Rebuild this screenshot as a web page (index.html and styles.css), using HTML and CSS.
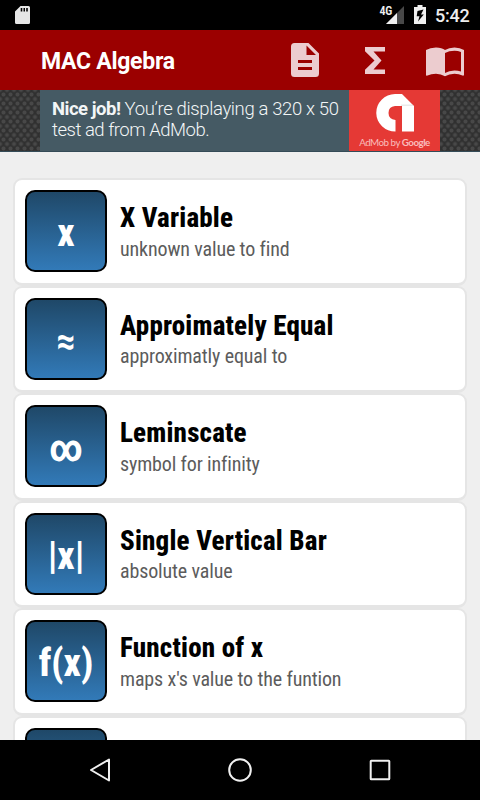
FILE: index.html
```
<!DOCTYPE html>
<html lang="en">
<head>
<meta charset="utf-8">
<title>MAC Algebra</title>
<link rel="stylesheet" href="styles.css">
</head>
<body>
<div class="status">
  <svg class="sd" width="15" height="18" viewBox="0 0 15 18"><path fill="#e6e6e6" fill-rule="evenodd" d="M5.500 0H13.500Q15 0 15 1.500V16.500Q15 18 13.500 18H1.500Q0 18 0 16.500V5.500ZM5.700 2V5.500H7.300V2ZM8.500 2V5.500H10V2ZM11.200 2V5.500H12.800V2Z"/></svg>
  <span class="net">4G</span>
  <svg class="signal" width="18" height="18" viewBox="0 0 18 18"><path fill="#484848" d="M18 0V18H0Z"/><path fill="#f0f0f0" d="M11 7V18H0Z"/></svg>
  <svg class="battery" width="12" height="19" viewBox="0 0 12 19"><path fill="#f0f0f0" d="M3.500 0H8.500V2H12V19H0V2H3.500Z"/><path d="M9.500 4.500 3.500 6 2.700 11.300H5.500L4 16.500 9.800 9.500H7Z"/></svg>
  <span class="clock">5:42</span>
</div>
<header class="bar">
  <h1 class="title">MAC Algebra</h1>
  <svg class="doc" width="28" height="34" viewBox="0 0 28 34"><path fill="#eccccf" fill-rule="evenodd" d="M3.500 0H17.500L28 10.500V30.500Q28 34 24.500 34H3.500Q0 34 0 30.500V3.500Q0 0 3.500 0ZM15.500 2.500V12H25ZM7 17V20H21V17ZM7 24V27H21V24Z"/></svg>
  <svg class="sigma" width="20" height="27" viewBox="0 0 20 27"><path fill="#eccccf" d="M0 0H20V4.500H8.500L16.500 13.500 8.500 22.500H20V27H0V22.700L9.500 13.500 0 4.300Z"/></svg>
  <svg class="book" width="38" height="30" viewBox="0 0 38 30"><path fill="#eccccf" fill-rule="evenodd" d="M0 3Q4 .5 10 .5T19 3Q23 .5 28.500 .5T38 3V28Q37.500 29 36.500 28.500Q33 26.800 28.500 26.800 23 26.800 19 29.300 15 26.800 10 26.800 5 26.800 1.500 28.500 0 29 0 28ZM19 6V26Q23 23.500 28.500 23.500 32 23.500 35 24.500V5Q32 3.800 28.500 3.800 23 3.800 19 6Z"/></svg>
</header>
<section class="ad">
  <div class="pitch">
    <p class="greeting"><b>Nice job!</b> You’re displaying a 320 x 50</p>
    <p>test ad from AdMob.</p>
  </div>
  <div class="brand">
    <svg class="mark" width="38" height="38" viewBox="0 0 38 38"><path fill="#fff" d="M19 0H26L38 12V37.500H26V12H19Q12.500 12.500 12.500 19 12.500 25 19.500 26V37.500A19 18.750 0 0 1 19 0Z"/><path fill="#ddd" opacity=".6" d="M25 12H38L36 10.500H25Z"/></svg>
    <div class="brand-name">AdMob by <span>Google</span></div>
  </div>
</section>
<main class="list">
  <article class="card"><div class="tile"><span>x</span></div><div class="text"><h2>X Variable</h2><p>unknown value to find</p></div></article>
  <article class="card"><div class="tile"><span>≈</span></div><div class="text"><h2>Approimately Equal</h2><p>approximatly equal to</p></div></article>
  <article class="card"><div class="tile"><span class="infinity">∞</span></div><div class="text"><h2>Leminscate</h2><p>symbol for infinity</p></div></article>
  <article class="card"><div class="tile"><span>|x|</span></div><div class="text"><h2>Single Vertical Bar</h2><p>absolute value</p></div></article>
  <article class="card"><div class="tile"><span>f(x)</span></div><div class="text"><h2>Function of x</h2><p>maps x's value to the funtion</p></div></article>
  <article class="card"><div class="tile"></div></article>
</main>
<nav class="nav">
  <svg width="24" height="24" viewBox="0 0 24 24"><path d="M21 1.500V22.500L3 12Z"/></svg>
  <svg width="24" height="24" viewBox="0 0 24 24"><circle cx="12" cy="12" r="10.800"/></svg>
  <svg width="24" height="24" viewBox="0 0 24 24"><rect x="2.700" y="2.700" width="18.600" height="18.600" rx=".6"/></svg>
</nav>
</body>
</html>
```
FILE: styles.css
```
* { box-sizing: border-box; }
body { margin: 0; width: 480px; height: 800px; overflow: hidden; display: flex; flex-direction: column; background: #efefef; font-family: Roboto, sans-serif; }
h1, h2, p { margin: 0; white-space: nowrap; }
svg { display: block; flex: none; }
.status { height: 30px; flex: none; background: #000; display: flex; align-items: flex-start; padding: 6px 10px 0 15px; color: #eee; }
.net { margin-left: auto; font-size: 12px; line-height: 10px; font-weight: 600; font-stretch: 75%; letter-spacing: -.3px; margin-right: -6px; z-index: 1; }
.battery { margin: -1px 9px 0 10px; }
.clock { font-size: 18px; line-height: 20px; font-weight: 500; width: 35px; white-space: nowrap; letter-spacing: -.2px; }
.bar { height: 60px; flex: none; background: #9b0000; display: flex; align-items: center; padding: 0 16px 0 41px; }
.title { color: #fff; font-size: 23px; font-weight: 700; letter-spacing: -.28px; margin: 2px auto 0 0; }
.sigma { margin: 0 41px 0 46px; }
.book { margin-top: 3px; }
.ad { height: 62px; flex: none; display: flex; padding: 0 40px; border-bottom: 1px solid #344b57; background-color: #303030; background-image: radial-gradient(circle, #484848 1.500px, transparent 2.500px), radial-gradient(circle, #484848 1.500px, transparent 2.500px); background-size: 7px 9px; background-position: 0 0, 3.500px 4.500px; }
.pitch { width: 309px; background: #455a64; padding: 9px 0 0 12px; color: #f3f6f7; font-size: 18.500px; font-weight: 300; line-height: 20.500px; letter-spacing: -.49px; }
.greeting { letter-spacing: -.36px; }
.pitch b { font-weight: 700; letter-spacing: -.49px; }
.brand { width: 91px; background: #e53935; display: flex; flex-direction: column; align-items: center; padding-top: 4px; }
.brand-name { color: #f9bcbb; font-size: 9.800px; line-height: 12px; margin-top: 4px; white-space: nowrap; font-family: Lato, sans-serif; letter-spacing: -.5px; }
.brand-name span { font-weight: 700; }
.list { flex: 1; min-height: 0; overflow: hidden; padding: 26px 13px 0; }
.card { height: 107.500px; border: 2px solid #e5e5e5; border-bottom-width: 3.500px; border-radius: 9px; background: #fff; display: flex; padding: 10px; }
.tile { width: 82px; height: 82px; flex: none; border: 2px solid #000; border-radius: 10px; background: linear-gradient(#1f4868, #327ab8); display: flex; justify-content: center; color: #fff; font-size: 38px; line-height: 82px; font-weight: 800; font-stretch: 75%; }
.infinity { font-weight: 700; }
.text { padding: 12px 0 0 13px; font-stretch: 75%; }
.text h2 { font-size: 27px; line-height: 32px; font-weight: 800; letter-spacing: .2px; color: #000; }
.text p { font-size: 20px; line-height: 24px; margin-top: 2.500px; color: #5c5c5c; letter-spacing: -.14px; }
.nav { height: 60px; flex: none; background: #000; display: flex; justify-content: center; align-items: center; gap: 116px; fill: none; stroke: #f0f0f0; stroke-width: 2; stroke-linejoin: round; }
```
